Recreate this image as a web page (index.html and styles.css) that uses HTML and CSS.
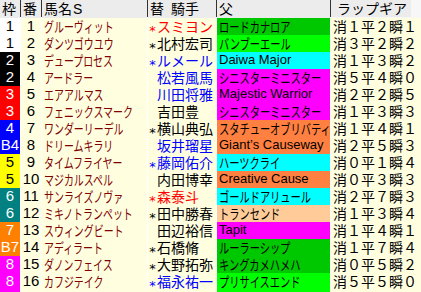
FILE: index.html
```html
<!DOCTYPE html>
<html lang="ja">
<head>
<meta charset="utf-8">
<link rel="stylesheet" href="styles.css">
</head>
<body>
<div class="table">
  <div class="row head">
    <div class="c">枠</div>
    <div class="c">番</div>
    <div class="c hname">馬名<span class="lat">S</span></div>
    <div class="c">替<span class="gap">騎手</span></div>
    <div class="c">父</div>
    <div class="c lap"><span class="lap-label">ラップギア</span></div>
  </div>
  <div class="row"><div class="c waku w1">1</div><div class="c num">1</div><div class="c name"><span class="k">グルーヴィット</span></div><div class="c jockey red"><span class="mark">*</span>スミヨン</div><div class="c sire g1"><span class="k">ロードカナロア</span></div><div class="c lap">消１平２瞬１</div></div>
  <div class="row"><div class="c waku w1">1</div><div class="c num">2</div><div class="c name"><span class="k">ダンツゴウユウ</span></div><div class="c jockey"><span class="mark">*</span>北村宏司</div><div class="c sire g2"><span class="k">バンブーエール</span></div><div class="c lap">消３平２瞬２</div></div>
  <div class="row"><div class="c waku w2">2</div><div class="c num">3</div><div class="c name"><span class="k">デュープロセス</span></div><div class="c jockey blue"><span class="mark">*</span>ルメール</div><div class="c sire cy">Daiwa Major</div><div class="c lap">消１平３瞬２</div></div>
  <div class="row"><div class="c waku w2">2</div><div class="c num">4</div><div class="c name"><span class="k">アードラー</span></div><div class="c jockey blue"><span class="mark"></span>松若風馬</div><div class="c sire mg"><span class="k">シニスターミニスター</span></div><div class="c lap">消５平４瞬０</div></div>
  <div class="row"><div class="c waku w3">3</div><div class="c num">5</div><div class="c name"><span class="k">エアアルマス</span></div><div class="c jockey blue"><span class="mark"></span>川田将雅</div><div class="c sire mg">Majestic Warrior</div><div class="c lap">消２平２瞬５</div></div>
  <div class="row"><div class="c waku w3">3</div><div class="c num">6</div><div class="c name"><span class="k">フェニックスマーク</span></div><div class="c jockey"><span class="mark"></span>吉田豊</div><div class="c sire mg"><span class="k">シニスターミニスター</span></div><div class="c lap">消１平３瞬３</div></div>
  <div class="row"><div class="c waku w4">4</div><div class="c num">7</div><div class="c name"><span class="k">ワンダーリーデル</span></div><div class="c jockey"><span class="mark">*</span>横山典弘</div><div class="c sire or"><span class="k">スタチューオブリバティ</span></div><div class="c lap">消１平４瞬１</div></div>
  <div class="row"><div class="c waku w4">B4</div><div class="c num">8</div><div class="c name"><span class="k">ドリームキラリ</span></div><div class="c jockey blue"><span class="mark"></span>坂井瑠星</div><div class="c sire or">Giant’s Causeway</div><div class="c lap">消２平５瞬３</div></div>
  <div class="row"><div class="c waku w5">5</div><div class="c num">9</div><div class="c name"><span class="k">タイムフライヤー</span></div><div class="c jockey blue"><span class="mark">*</span>藤岡佑介</div><div class="c sire cy"><span class="k">ハーツクライ</span></div><div class="c lap">消０平１瞬４</div></div>
  <div class="row"><div class="c waku w5">5</div><div class="c num">10</div><div class="c name"><span class="k">マジカルスペル</span></div><div class="c jockey"><span class="mark"></span>内田博幸</div><div class="c sire or">Creative Cause</div><div class="c lap">消０平３瞬３</div></div>
  <div class="row"><div class="c waku w6">6</div><div class="c num">11</div><div class="c name"><span class="k">サンライズノヴァ</span></div><div class="c jockey red"><span class="mark">*</span>森泰斗</div><div class="c sire cy"><span class="k">ゴールドアリュール</span></div><div class="c lap">消２平７瞬３</div></div>
  <div class="row"><div class="c waku w6">6</div><div class="c num">12</div><div class="c name"><span class="k">ミキノトランペット</span></div><div class="c jockey"><span class="mark">*</span>田中勝春</div><div class="c sire pc"><span class="k">トランセンド</span></div><div class="c lap">消１平３瞬４</div></div>
  <div class="row"><div class="c waku w7">7</div><div class="c num">13</div><div class="c name"><span class="k">スウィングビート</span></div><div class="c jockey"><span class="mark"></span>田辺裕信</div><div class="c sire mg">Tapit</div><div class="c lap">消１平４瞬１</div></div>
  <div class="row"><div class="c waku w7">B7</div><div class="c num">14</div><div class="c name"><span class="k">アディラート</span></div><div class="c jockey"><span class="mark">*</span>石橋脩</div><div class="c sire g1"><span class="k">ルーラーシップ</span></div><div class="c lap">消１平７瞬４</div></div>
  <div class="row"><div class="c waku w8">8</div><div class="c num">15</div><div class="c name"><span class="k">ダノンフェイス</span></div><div class="c jockey"><span class="mark">*</span>大野拓弥</div><div class="c sire g1"><span class="k">キングカメハメハ</span></div><div class="c lap">消０平５瞬２</div></div>
  <div class="row"><div class="c waku w8">8</div><div class="c num">16</div><div class="c name"><span class="k">カフジテイク</span></div><div class="c jockey blue"><span class="mark">*</span>福永祐一</div><div class="c sire g2"><span class="k">プリサイスエンド</span></div><div class="c lap">消５平５瞬０</div></div>
</div>
</body>
</html>
```

FILE: styles.css
```css
html, body {
  margin: 0;
  padding: 0;
  background: #ffffe0;
}
body {
  width: 421px;
  height: 292px;
  overflow: hidden;
  font-family: "Noto Sans CJK JP", "Liberation Sans", sans-serif;
  font-size: 14px;
  color: #000;
}
.table {
  display: flex;
  flex-direction: column;
  gap: 1px;
  background: #ffffff;
  padding-bottom: 1px;
}
.row {
  display: grid;
  grid-template-columns: 20px 20px 105px 68px 113px 1fr;
  column-gap: 1px;
  height: 16px;
  background: #ffffff;
}
.row.head {
  height: 17px;
  background: #333333;
}
.c {
  background: #ffffe0;
  line-height: 16px;
  white-space: nowrap;
}
.head .c {
  background: #ececec;
  line-height: 17px;
  padding-left: 2px;
}
.head .c.lap {
  background: #f7f7f7;
  padding-left: 0;
}
.gap {
  margin-left: 7px;
}
.lat {
  font-family: "Liberation Sans", sans-serif;
  margin-left: 1px;
}
.lap-label {
  display: block;
  width: 74px;
  padding-left: 6px;
  background: #ececec;
}
.waku, .num {
  text-align: center;
  font-family: "Liberation Sans", sans-serif;
  font-size: 15px;
}
.name {
  padding-left: 2px;
  color: #800000;
  overflow: hidden;
}
.k {
  display: inline-block;
  transform: scaleX(0.71);
  transform-origin: 0 50%;
}
.jockey {
  color: #000;
}
.jockey.red { color: #ff0000; }
.jockey.blue { color: #0000ff; }
.mark {
  display: inline-block;
  width: 9px;
  text-align: center;
  font-family: "DejaVu Sans", sans-serif;
  font-size: 13px;
  vertical-align: -3px;
}
.sire {
  padding-left: 2px;
  font-family: "Liberation Sans", "Noto Sans CJK JP", sans-serif;
  font-size: 13px;
  overflow: hidden;
}
.sire .k {
  font-family: "Noto Sans CJK JP", sans-serif;
  font-size: 14px;
  transform: scaleX(0.73);
}
.lap {
  padding-left: 2px;
  overflow: hidden;
}
.w1 { background: #ffffff; color: #000; }
.w2 { background: #000000; color: #fff; }
.w3 { background: #ff0000; color: #fff; }
.w4 { background: #0000ff; color: #fff; }
.w5 { background: #ffff00; color: #000; }
.w6 { background: #008080; color: #fff; }
.w7 { background: #ff8000; color: #fff; }
.w8 { background: #ff00ff; color: #fff; }
.g1 { background: #00c800; }
.g2 { background: #00ff00; }
.cy { background: #00ffff; }
.mg { background: #ff00ff; }
.or { background: #ff8040; }
.pc { background: #ffcc99; }
```
